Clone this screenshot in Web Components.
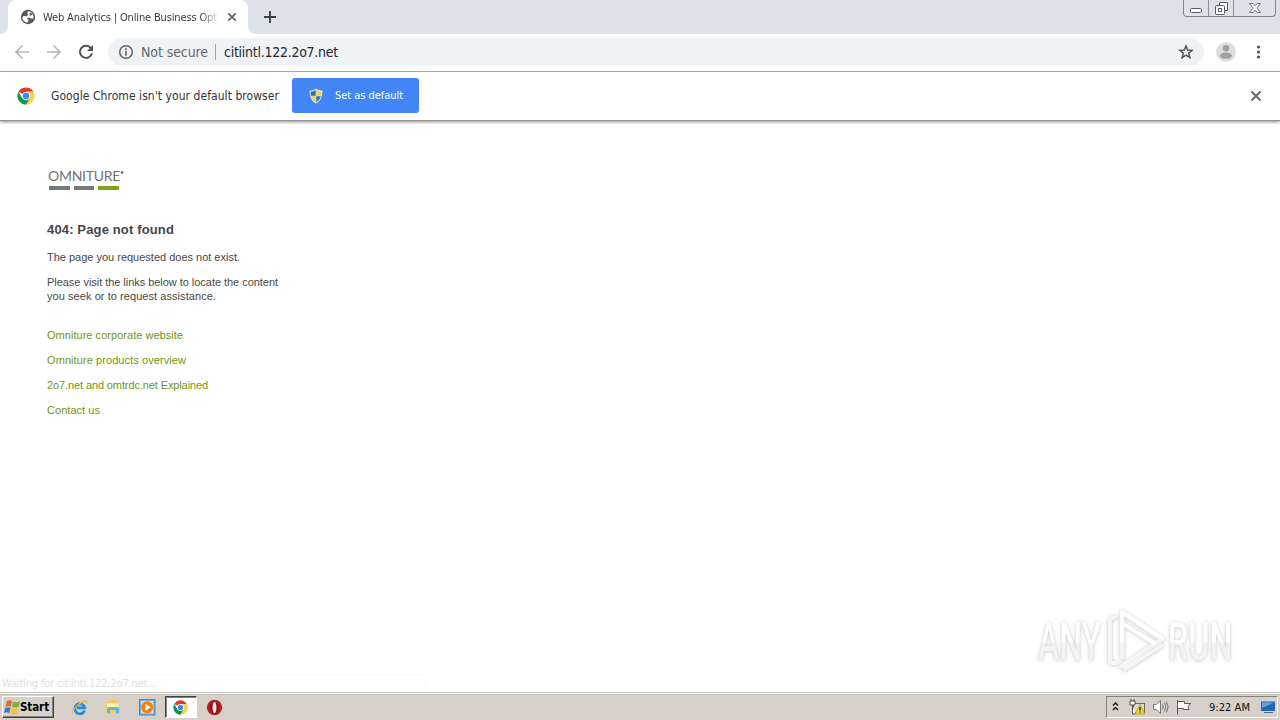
<!DOCTYPE html>
<html lang="en"><head><meta charset="utf-8"><title>Web Analytics | Online Business Optimization</title>
<style>html,body{margin:0;height:100%;overflow:hidden;background:#fff}</style></head><body>
<desktop-screen></desktop-screen>
<script>
const define=(name,css,html)=>customElements.define(name,class extends HTMLElement{
  constructor(){super();this.attachShadow({mode:'open'}).innerHTML=`<style>*{box-sizing:border-box}svg{display:block;flex:none}${css}</style>${html}`}
});
/* A single line of text tracked out to a fixed measure given by its w attribute. */
customElements.define('fit-text',class extends HTMLElement{
  constructor(){super();this.attachShadow({mode:'open'}).innerHTML='<style>:host{display:block;white-space:pre;flex:none}span{display:inline-block}</style><span><slot></slot></span>'}
  connectedCallback(){
    const s=this.shadowRoot.querySelector('span'),w=+this.getAttribute('w');
    const n=this.textContent.length;
    s.style.letterSpacing=((w-s.getBoundingClientRect().width)/n)+'px';
    this.style.width=w+'px';
  }
});
define('chrome-logo',':host{display:block;width:18px;height:18px}svg{width:100%;height:100%}',
`<svg viewBox="0 0 48 48"><circle cx="24" cy="24" r="23" fill="#fff"/><path d="M24 24 4.1 12.5A23 23 0 0 1 43.9 12.5H24z" fill="#df3a30"/><path d="M43.9 12.5A23 23 0 0 1 24 47L34 29.5 34 18 24 12.5z" fill="#fcd04b"/><path d="M4.1 12.5A23 23 0 0 0 24 47L34 29.8 14 29.8z" fill="#149454"/><circle cx="24" cy="24" r="11" fill="#fff"/><circle cx="24" cy="24" r="8.7" fill="#4387ef"/></svg>`);
define('window-controls',':host{display:flex;width:93px;height:17px;border:1px solid #80858f;border-top:0;border-radius:0 0 4px 4px;background:#dfe2e8}div{display:flex;justify-content:center;align-items:flex-start}div+div{border-left:1px solid #8b909a}.a{width:24px}.b{width:25px}.c{flex:1}',
`<div class="a"><svg width="14" height="16" fill="none"><rect x="1.5" y="8.5" width="11" height="4" rx="1" fill="#fff" stroke="#555b66"/></svg></div>
<div class="b"><svg width="15" height="16" fill="none" stroke="#555b66"><path d="M5.5 5V2.5h8v8H11" fill="#fff"/><rect x="1.5" y="5.5" width="9" height="9" rx="1" fill="#fff"/><rect x="4.5" y="8.500" width="3" height="3"/></svg></div>
<div class="c"><svg width="14" height="16"><path d="M1.500 3.500H5L7 5.700 9 3.500H12.500L9 8 12.500 12.500H9L7 10.200 5 12.500H1.500L5 8z" fill="#fff" stroke="#6d737d"/></svg></div>`);
define('tab-strip',`:host{display:flex;height:34px;background:#dee1e6;font:11px "DejaVu Sans Condensed","DejaVu Sans",sans-serif;color:#35383c}
.lead{width:8px;height:34px;background:#fff}.lead:before{content:"";display:block;height:100%;background:#dee1e6;border-radius:0 0 8px 0}
.tab{width:240px;height:34px;background:#fff;border-radius:8px 8px 0 0;display:flex;align-items:center;padding-left:12px}
.title{width:176px;margin-left:7px;-webkit-mask-image:linear-gradient(90deg,#000 156px,transparent 178px)}
.x{margin-left:8px}.tail{width:8px;background:#fff}.tail:before{content:"";display:block;height:100%;background:#dee1e6;border-radius:0 0 0 8px}.plus{margin:10px 0 0 7px}window-controls{margin:0 4px 0 auto}`,
`<div class="lead"></div><div class="tab"><svg width="16" height="16" viewBox="0 0 16 16"><circle cx="8" cy="8" r="7.200" fill="#555a5f"/><path d="M8.600 2.200C7 3.600 6.900 4.600 8.300 5.400L6.800 7.200 3.400 7 2.200 9 C3 12 5.500 13.600 7.500 13.500L8.700 11 6.800 9.300 9.300 8.500 11 9.600 13.500 9.400C14 5.900 12 2.500 8.600 2.200z" fill="#fff"/><path d="M10 3.200l2.600 2-1.500 1.300H9.300z" fill="#555a5f"/></svg>
<div class="title"><fit-text w="174">Web Analytics | Online Business Opt</fit-text></div><svg class="x" width="10" height="10"><path d="M1.300 1.300 8.700 8.700M8.700 1.300 1.300 8.700" stroke="#5b5e62" stroke-width="1.700"/></svg></div><div class="tail"></div>
<svg class="plus" width="14" height="14"><path d="M7 1v12M1 7h12" stroke="#3c4043" stroke-width="1.900"/></svg><window-controls></window-controls>`);
define('browser-toolbar',`:host{display:flex;align-items:center;height:38px;border-bottom:1px solid #b5b6b8;background:#fff;padding:0 14px 2px;font:14px "DejaVu Sans Condensed","DejaVu Sans",sans-serif}
.f{margin-left:16px}.r{margin-left:16px}.omni{flex:1;height:28px;border-radius:14px;background:#f0f3f5;display:flex;align-items:center;margin:0 12px 0 14px;padding:0 10px;color:#62676c}
.sec{margin-left:7px}.bar{width:1px;height:16px;background:#a3a7ab;margin:0 8px 0 7px}.url{color:#24272b}.star{margin-left:auto}.dots{margin-left:14px;margin-right:-1px}`,
`<svg width="16" height="16" fill="none" stroke="#b4b6b8" stroke-width="1.700"><path d="M15 8H2M8.500 1.500 2 8l6.500 6.500"/></svg>
<svg class="f" width="16" height="16" fill="none" stroke="#b4b6b8" stroke-width="1.700"><path d="M1 8H14M7.500 1.500 14 8l-6.500 6.500"/></svg>
<svg class="r" width="16" height="16" viewBox="0 0 16 16"><path d="M13 4.200A6.100 6.100 0 1 0 14 9.300" fill="none" stroke="#505357" stroke-width="2"/><path d="M15 1v6H9z" fill="#505357"/></svg>
<div class="omni"><svg width="16" height="16"><circle cx="8" cy="8" r="6.300" fill="none" stroke="#5f6368" stroke-width="1.500"/><path d="M8 7v4.700M8 4.300v1.600" stroke="#5f6368" stroke-width="1.600"/></svg><fit-text class="sec" w="67">Not secure</fit-text><div class="bar"></div><fit-text class="url" w="114">citiintl.122.2o7.net</fit-text>
<svg class="star" width="16" height="16"><path d="M8 1.900 9.700 6 14.200 6.300 10.700 9.200 11.900 13.600 8 11.200 4.100 13.600 5.300 9.200 1.800 6.300 6.300 6z" fill="none" stroke="#505458" stroke-width="1.500"/></svg></div>
<svg width="20" height="20"><circle cx="10" cy="10" r="10" fill="#dedede"/><circle cx="10" cy="6.200" r="3.200" fill="#a0a0a0"/><ellipse cx="10" cy="13.700" rx="6" ry="3.100" fill="#a0a0a0"/></svg>
<svg class="dots" width="17" height="16" fill="#505357"><circle cx="8.500" cy="3" r="1.600"/><circle cx="8.500" cy="8" r="1.600"/><circle cx="8.500" cy="13" r="1.600"/></svg>`);
define('info-bar',`:host{display:flex;align-items:center;height:49px;background:#fff;border-bottom:1px solid #949494;box-shadow:0 1px 3px #0007;padding:0 18px 0 17px;position:relative;font:12px "DejaVu Sans Condensed","DejaVu Sans",sans-serif;color:#303236}
.msg{margin-left:16px}.btn{height:35px;width:127px;margin-left:13px;margin-bottom:1px;background:#4285f4;border-radius:3px;display:flex;align-items:center;padding-left:16px;color:#fff;font-size:11px}.lab{margin-left:11px}.x{margin-left:auto}`,
`<chrome-logo></chrome-logo><fit-text class="msg" w="228">Google Chrome isn't your default browser</fit-text>
<div class="btn"><svg width="16" height="16"><path d="M8 .5C6 2 4 2.500 1.500 2.500 1.500 8 3 13 8 15.500 13 13 14.500 8 14.500 2.500 12 2.500 10 2 8 .5z" fill="#d9e1e8"/><path d="M8.300 2v5.700H13C13.300 6 13.300 5 13.300 3.700 11 3.600 10 3 8.300 2zM7.700 8.300H3.200C4 11 5.500 13 7.700 14.200z" fill="#f5d43b"/><path d="M7.700 2v5.700H3C2.700 6 2.700 5 2.700 3.700 5 3.600 6 3 7.700 2zM8.300 8.300H12.800C12 11 10.500 13 8.300 14.200z" fill="#2673bb"/></svg><fit-text class="lab" w="68">Set as default</fit-text></div>
<svg class="x" width="12" height="12"><path d="M1.500 1.500 10.500 10.500M10.500 1.500 1.500 10.500" stroke="#606468" stroke-width="1.900"/></svg>`);
define('omniture-logo',`:host{display:block;width:77px;height:22px;color:#707173;font:14px/14px Lato,sans-serif}.w{display:flex}.s{font-size:7px;line-height:7px}.bars{display:flex;gap:4px;margin:3px 0 0 1px}.bars i{width:20.700px;height:4px;background:#777879}.bars i:last-child{background:#80a512}`,
`<div class="w"><fit-text w="72">OMNITURE</fit-text><span class="s">•</span></div><div class="bars"><i></i><i></i><i></i></div>`);
define('error-page',`:host{display:block;flex:1;min-height:0;padding:48px 0 0 48px;background:#fff;font:11px/14px "Liberation Sans",Arial,sans-serif;color:#484848}
h1{font-size:13px;line-height:16px;margin:31px 0 12px;color:#464646}p{margin:0 0 11px}.links{margin-top:25px;color:#6d9612}a{display:block;margin-bottom:11px}h1,p,a{margin-left:-1px}`,
`<omniture-logo></omniture-logo><h1><fit-text w="127">404: Page not found</fit-text></h1><p><fit-text w="193">The page you requested does not exist.</fit-text></p><p><fit-text w="231">Please visit the links below to locate the content</fit-text><fit-text w="169">you seek or to request assistance.</fit-text></p>
<div class="links"><a><fit-text w="136">Omniture corporate website</fit-text></a><a><fit-text w="139">Omniture products overview</fit-text></a><a><fit-text w="161">2o7.net and omtrdc.net Explained</fit-text></a><a><fit-text w="53">Contact us</fit-text></a></div>`);
define('status-bubble',`:host{display:block;width:425px;height:18px;border:1px solid #fafafa;border-left:0;border-bottom:0;border-radius:0 3px 0 0;background:#fefefe;padding:2px 2px;font:11px/14px "DejaVu Sans Condensed","DejaVu Sans",sans-serif;color:#e0e0e0}`,`<fit-text w="154">Waiting for citiintl.122.2o7.net...</fit-text>`);
define('run-watermark',`:host{display:block;width:230px;height:90px}text{font:500 53px Roboto,sans-serif}svg{overflow:visible;filter:drop-shadow(0 0 1px #0002) drop-shadow(0 1px 2px #0002)}`,
`<svg width="230" height="90" viewBox="0 0 230 90"><defs><linearGradient id="g" gradientUnits="userSpaceOnUse" x1="0" y1="-38" x2="0" y2="2"><stop offset=".5" stop-color="#fff"/><stop offset=".53" stop-color="#f2f2f2"/><stop offset="1" stop-color="#f3f3f3"/></linearGradient></defs>
<g fill="url(#g)"><text transform="translate(8 57) scale(.605 1)">ANY</text><text transform="translate(138 57) scale(.61 1)">RUN</text></g>
<g fill="none" stroke-linejoin="round" stroke-linecap="round"><path d="M92 54V9L132 36 92 63" stroke="#f4f4f4" stroke-width="5"/><path d="M92 38V9L132 35M92 20 124 40" stroke="#fff" stroke-width="4"/><path d="M85 14 80 16V60L86 60M95 66 132 42" stroke="#f5f5f5" stroke-width="4"/></g></svg>`);
define('start-button',`:host{display:flex;align-items:center;width:52px;height:22px;background:#d5d0c8;border:1px solid;border-color:#fff #404040 #404040 #fff;box-shadow:inset -1px -1px #85817a;padding-left:1px;font:bold 11.500px "DejaVu Sans Condensed","DejaVu Sans",sans-serif;color:#000}fit-text{margin-left:-1px}`,
`<svg width="17" height="17" viewBox="0 0 17 17"><path d="M3 2Q5.500 .5 8 2L6.800 7.500Q4 6.500 1.500 8z" fill="#e96627"/><path d="M9 2.400Q12 4 16 2.500L14.600 8Q11 9.200 7.900 7.800z" fill="#76b43b"/><path d="M1.200 9Q4 7.500 6.500 8.700L5.200 14Q3 12.700 0 14z" fill="#3779c4"/><path d="M7.600 9Q11 10.300 14.400 9L13 14.600Q9.500 16 6.200 14.400z" fill="#f3c334"/></svg><fit-text w="29">Start</fit-text>`);
define('system-tray',`:host{display:flex;align-items:center;width:172px;height:22px;border:1px solid;border-color:#85817a #fff #fff #85817a;padding:0 1px 0 5px;font:11px "DejaVu Sans Condensed","DejaVu Sans",sans-serif;color:#111}.n{margin-left:10px}.v{margin-left:7px}.fl{margin-left:7px}.t{margin-left:17px}.d{margin-left:auto}`,
`<svg width="7" height="12" fill="none" stroke="#111" stroke-width="1.300"><path d="M1 4.500 3.500 2 6 4.500M1 9 3.500 6.500 6 9"/></svg>
<svg class="n" width="16" height="16"><rect x="4.500" y="4.500" width="11" height="9" fill="#dedbd2" stroke="#666"/><path d="M1 2h5v4H1zM3.500 6v9h3M2 0v2M5 0v2" fill="#fff" stroke="#55534f"/><path d="M11 5.500 16 15H6z" fill="#f5d321" stroke="#b09420" stroke-width=".7"/><path d="M11 8v3.500M11 12.500v1" stroke="#222" stroke-width="1.300"/></svg>
<svg class="v" width="17" height="16" fill="none" stroke="#777"><path d="M1.500 5.500H4L8.500 1.500V14.500L4 10.500H1.500z" fill="#fff"/><path d="M10.500 5.500Q12 8 10.500 10.500M12.500 3.500Q15 8 12.500 12.500M14.500 2.500Q17.500 8 14.500 13.500"/></svg>
<svg class="fl" width="16" height="16"><path d="M1.500 1V15.500M1.500 2.500H8.500V4.500H14.500L12 7.500 13 10.500H7.500V9.500H1.500" fill="#fff" stroke="#5c5a57"/></svg>
<fit-text class="t" w="41">9:22 AM</fit-text><svg class="d" width="16" height="16"><path d="M1 2.500H15V12H1z" fill="#2467b7"/><path d="M2 3.500H14L2 9z" fill="#62a1e2"/><path d="M4 13.500H13" stroke="#536a87"/></svg>`);
define('task-bar',`:host{display:flex;align-items:center;height:28px;padding:2px 2px 0 2px;background:linear-gradient(#c5c3bd 0 1px,#fff 1px 2px,#c7c3bb 2px 3px,#d6d0c8 3px)}
.a{margin-left:17px}.b{margin-left:17px}.c{margin-left:18px}.active{width:32px;height:22px;margin-left:9px;background:#fff;border:1px solid;border-color:#404040 #fff #fff #404040;box-shadow:inset 1px 1px #85817a;display:flex;align-items:center;justify-content:center}.o{margin-left:9px}chrome-logo{width:15px;height:15px;margin-right:1px}system-tray{margin-left:auto}`,
`<start-button></start-button>
<svg class="a" width="17" height="17" viewBox="0 0 17 17"><path d="M13.500 11.500A5 5 0 1 1 13.700 8.800H6" fill="none" stroke="#278bd6" stroke-width="2.800"/><path d="M2 15.500C-2 12 11-1 16 1.500 17 2.500 16 4 15 5 15.500 1 9 4 5 8.500 2 12 1.500 14 2 15.500z" fill="#e8c044"/></svg>
<svg class="b" width="16" height="16"><path d="M1 2.500H6L7 1H13V5H15V14H1z" fill="#edcb68"/><path d="M2 4.500H14V8H2z" fill="#fff0a8"/><path d="M2 14.500V9.500Q2 8 4 8H12Q14 8 14 9.500V14.500H11V11H5V14.500z" fill="#64b6df"/></svg>
<svg class="c" width="17" height="17"><rect x=".5" y=".5" width="15.500" height="15.500" fill="#72addb" stroke="#4989bd"/><rect x="2" y="2" width="12.500" height="12.500" fill="#cce1ef"/><circle cx="8.200" cy="8.200" r="6" fill="#f08213"/><path d="M6.500 4.700V11.700L11.800 8.200z" fill="#fff"/></svg>
<div class="active"><chrome-logo></chrome-logo></div>
<svg class="o" width="17" height="17"><circle cx="8.500" cy="8.500" r="7.700" fill="#b71f21"/><ellipse cx="8.500" cy="8.500" rx="4.300" ry="6.300" fill="#871015"/><ellipse cx="8.500" cy="8.500" rx="2" ry="5.700" fill="#f4e6e3"/></svg><system-tray></system-tray>`);
define('desktop-screen',`:host{display:flex;flex-direction:column;width:1280px;height:720px;position:relative;background:#fff}status-bubble{position:absolute;left:0;bottom:28px}run-watermark{position:absolute;left:1030px;top:603px}`,
`<tab-strip></tab-strip><browser-toolbar></browser-toolbar><info-bar></info-bar><error-page></error-page><status-bubble></status-bubble><run-watermark></run-watermark><task-bar></task-bar>`);
</script></body></html>
